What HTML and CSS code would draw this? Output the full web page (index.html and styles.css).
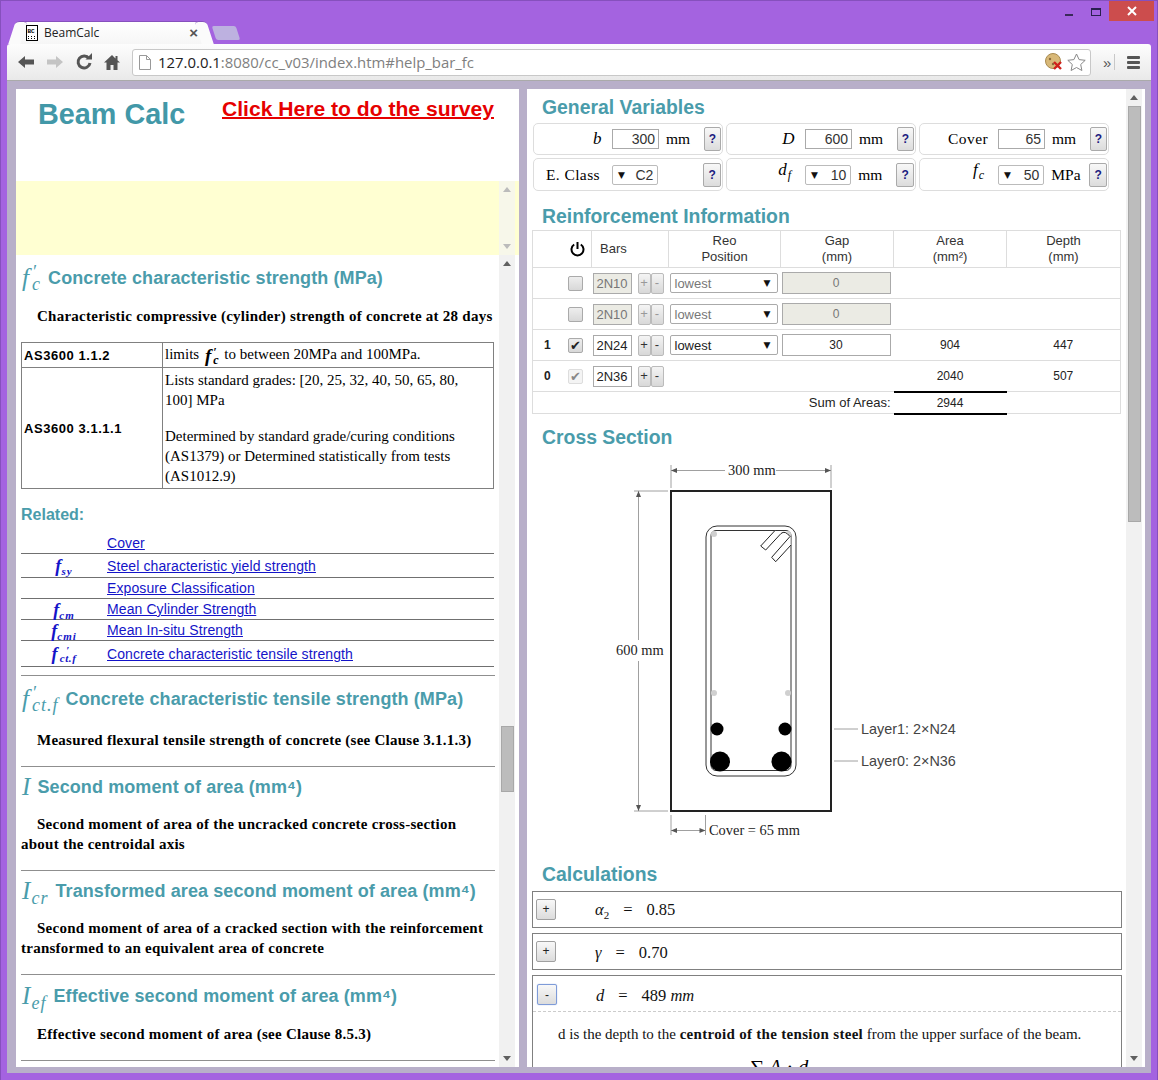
FILE: index.html
```html
<!DOCTYPE html>
<html lang="en">
<head>
<meta charset="utf-8">
<title>BeamCalc</title>
<link rel="stylesheet" href="styles.css">
</head>
<body>
<div class="window">
  <div class="titlebar">
    <div class="tab">
      <svg class="favicon" width="12" height="16" viewBox="0 0 12 16"><rect x=".5" y=".5" width="11" height="15" fill="#fff" stroke="#000"/><text x="1.5" y="7.5" class="fav-text">BC</text><path d="M2 11h1v1H2zM5 11h1v1H5zM8 11h1v1H8zM2 13h1v1H2zM5 13h1v1H5zM8 13h1v1H8z" fill="#000"/></svg>
      <span class="tab-title">BeamCalc</span>
      <span class="tab-close">×</span>
    </div>
    <div class="new-tab"></div>
    <div class="win-controls">
      <span class="win-min"></span>
      <span class="win-max"></span>
      <span class="win-close"><svg width="10" height="10" viewBox="0 0 10 10"><path d="M1 1l8 8M9 1l-8 8" stroke="#fff" stroke-width="2"/></svg></span>
    </div>
  </div>

  <div class="toolbar">
    <svg class="tool-icon" width="18" height="16" viewBox="0 0 18 16"><path d="M1 8l7-6v3.500h9v5H8V14z" fill="#555"/></svg>
    <svg class="tool-icon" width="18" height="16" viewBox="0 0 18 16"><path d="M17 8l-7-6v3.500H1v5h9V14z" fill="#c4c4c4"/></svg>
    <svg class="tool-icon" width="18" height="18" viewBox="0 0 18 18"><path d="M14 5.500A6 6 0 1 0 15 10" fill="none" stroke="#555" stroke-width="3"/><path d="M10.500 6.500H17V0z" fill="#555"/></svg>
    <svg class="tool-icon" width="16" height="16" viewBox="0 0 16 16"><path d="M8 1L0 8.500h2.500V16h4v-5h3v5h4V8.500H16l-2.500-2.300V2h-2v2.400z" fill="#555"/></svg>
    <div class="address">
      <svg class="page-icon" width="12" height="15" viewBox="0 0 12 15"><path d="M.5.500h7l4 4v10H.5z M7.500.500v4h4" fill="#fff" stroke="#999"/></svg>
      <span class="url"><span class="url-host">127.0.0.1</span>:8080/cc_v03/index.htm#help_bar_fc</span>
      <svg class="cookie" width="18" height="18" viewBox="0 0 18 18"><circle cx="8" cy="8" r="7.500" fill="#d8b878" stroke="#a88a50"/><circle cx="5" cy="6" r="1.200" fill="#8a6a3a"/><circle cx="8" cy="11" r="1.200" fill="#8a6a3a"/><path d="M9 9l7 7M16 9l-7 7" stroke="#d0201c" stroke-width="2.400"/></svg>
      <svg class="star" width="19" height="18" viewBox="0 0 19 18"><path d="M9.500 1l2.600 5.600 6.100.7-4.500 4.200 1.200 6-5.400-3-5.400 3 1.200-6L.8 7.300l6.100-.7z" fill="#fff" stroke="#888"/></svg>
    </div>
    <span class="chevrons">»</span>
    <span class="tool-sep"></span>
    <span class="menu-btn"><i></i><i></i><i></i></span>
  </div>

  <div class="frame">
    <aside class="left">
      <header class="brand">
        <h1 class="brand-title">Beam Calc</h1>
        <a class="survey" href="#survey">Click Here to do the survey</a>
      </header>
      <div class="notice">
        <div class="notice-body"></div>
        <div class="scrollbar"><span class="arrow up off"></span><span class="track"></span><span class="arrow down off"></span></div>
      </div>
      <div class="help">
        <div class="help-body">
          <h2 class="term first"><span class="sym">f<span class="stack"><span>c</span></span></span>Concrete characteristic strength (MPa)</h2>
          <p class="desc">Characteristic compressive (cylinder) strength of concrete at 28 days</p>
          <table class="refs">
            <tr class="ref-short"><th>AS3600 1.1.2</th><td>limits <span class="msym">f<span class="stack"><span>c</span></span></span> to between 20MPa and 100MPa.</td></tr>
            <tr class="ref-long"><th>AS3600 3.1.1.1</th><td><div>Lists standard grades: [20, 25, 32, 40, 50, 65, 80, 100] MPa</div><div class="ref-para">Determined by standard grade/curing conditions (AS1379) or Determined statistically from tests (AS1012.9)</div></td></tr>
          </table>
          <h3 class="related">Related:</h3>
          <table class="rel">
            <tr class="r22"><td></td><td><a href="#cover">Cover</a></td></tr>
            <tr class="r24"><td class="rs"><span class="rsym">f<sub>sy</sub></span></td><td><a href="#fsy">Steel characteristic yield strength</a></td></tr>
            <tr class="r21"><td></td><td><a href="#ec">Exposure Classification</a></td></tr>
            <tr class="r21"><td class="rs"><span class="rsym">f<sub>cm</sub></span></td><td><a href="#fcm">Mean Cylinder Strength</a></td></tr>
            <tr class="r21"><td class="rs"><span class="rsym">f<sub>cmi</sub></span></td><td><a href="#fcmi">Mean In-situ Strength</a></td></tr>
            <tr class="r26"><td class="rs"><span class="rsym">f<span class="stack"><span>ct.f</span></span></span></td><td><a href="#fctf">Concrete characteristic tensile strength</a></td></tr>
          </table>
          <hr class="rule gap8">
          <h2 class="term tall"><span class="sym">f<span class="stack"><span>ct.f</span></span></span>Concrete characteristic tensile strength (MPa)</h2>
          <p class="desc">Measured flexural tensile strength of concrete (see Clause 3.1.1.3)</p>
          <hr class="rule">
          <h2 class="term"><span class="sym">I</span>Second moment of area (mm⁴)</h2>
          <p class="desc">Second moment of area of the uncracked concrete cross-section about the centroidal axis</p>
          <hr class="rule">
          <h2 class="term"><span class="sym">I<sub>cr</sub></span>Transformed area second moment of area (mm⁴)</h2>
          <p class="desc">Second moment of area of a cracked section with the reinforcement transformed to an equivalent area of concrete</p>
          <hr class="rule">
          <h2 class="term mid"><span class="sym">I<sub>ef</sub></span>Effective second moment of area (mm⁴)</h2>
          <p class="desc">Effective second moment of area (see Clause 8.5.3)</p>
          <hr class="rule">
        </div>
        <div class="scrollbar"><span class="arrow up"></span><span class="track"><span class="thumb thumb-left"></span></span><span class="arrow down"></span></div>
      </div>
    </aside>

    <main class="right">
      <div class="sheet">
        <h2 class="sec sec-first">General Variables</h2>
        <div class="cards">
          <div class="card"><span class="lab math">b</span><input class="num" value="300"><span class="unit">mm</span><button class="q">?</button></div>
          <div class="card"><span class="lab math">D</span><input class="num" value="600"><span class="unit">mm</span><button class="q">?</button></div>
          <div class="card"><span class="lab">Cover</span><input class="num" value="65"><span class="unit">mm</span><button class="q">?</button></div>
          <div class="card tall-card"><span class="lab">E. Class</span><span class="pick"><span class="tri">▼</span><span>C2</span></span><span class="unit"></span><button class="q">?</button></div>
          <div class="card tall-card"><span class="lab math subbed">d<sub>f</sub></span><span class="pick"><span class="tri">▼</span><span>10</span></span><span class="unit">mm</span><button class="q">?</button></div>
          <div class="card tall-card"><span class="lab math subbed">f<sub>c</sub></span><span class="pick"><span class="tri">▼</span><span>50</span></span><span class="unit">MPa</span><button class="q">?</button></div>
        </div>

        <h2 class="sec sec-reo">Reinforcement Information</h2>
        <table class="reo">
          <colgroup><col class="c1"><col class="c2"><col class="c3"><col class="c4"><col class="c5"><col class="c6"></colgroup>
          <tr class="reo-head">
            <th class="hd-power"><svg class="power" width="15" height="16" viewBox="0 0 15 16"><path d="M4.200 3.500a6 6 0 1 0 6.600 0" fill="none" stroke="#000" stroke-width="2"/><path d="M7.500 1v7" stroke="#000" stroke-width="2"/></svg></th>
            <th class="hd-bars">Bars</th><th>Reo<br>Position</th><th>Gap<br>(mm)</th><th>Area<br>(mm²)</th><th>Depth<br>(mm)</th>
          </tr>
          <tr class="off">
            <td class="layer"><b></b><span class="chk"></span></td>
            <td><span class="bar-ctl"><input class="bar" value="2N10"><span class="pm">+</span><span class="pm">-</span></span></td>
            <td><span class="pos">lowest<span class="tri">▼</span></span></td>
            <td><input class="gap" value="0"></td><td></td><td></td>
          </tr>
          <tr class="off">
            <td class="layer"><b></b><span class="chk"></span></td>
            <td><span class="bar-ctl"><input class="bar" value="2N10"><span class="pm">+</span><span class="pm">-</span></span></td>
            <td><span class="pos">lowest<span class="tri">▼</span></span></td>
            <td><input class="gap" value="0"></td><td></td><td></td>
          </tr>
          <tr>
            <td class="layer"><b>1</b><span class="chk">✔</span></td>
            <td><span class="bar-ctl"><input class="bar" value="2N24"><span class="pm">+</span><span class="pm">-</span></span></td>
            <td><span class="pos">lowest<span class="tri">▼</span></span></td>
            <td><input class="gap" value="30"></td><td class="val">904</td><td class="val">447</td>
          </tr>
          <tr>
            <td class="layer"><b>0</b><span class="chk fixed">✔</span></td>
            <td><span class="bar-ctl"><input class="bar" value="2N36"><span class="pm">+</span><span class="pm">-</span></span></td>
            <td></td><td></td><td class="val">2040</td><td class="val">507</td>
          </tr>
          <tr class="sum">
            <td colspan="4" class="sum-label">Sum of Areas:</td><td class="val sum-val">2944</td><td></td>
          </tr>
        </table>

        <h2 class="sec sec-cross">Cross Section</h2>
        <svg class="section" width="380" height="400" viewBox="600 450 380 400">
          <g class="dim">
            <path d="M671 465v23M831 465v23M671 470.500h54M776 470.500h55"/>
            <path d="M634 491h34M634 811h34M638.500 491v149M638.500 661v150"/>
            <path d="M671 815v20M705.500 815v20M671 830.500h34.500"/>
            <path d="M834 729h24M834 761h24"/>
          </g>
          <g class="arrows">
            <path d="M671 470.500l6-2.500v5zM831 470.500l-6-2.500v5zM638.500 491l-2.500 6h5zM638.500 811l-2.500-6h5zM671 830.500l6-2.500v5zM705.500 830.500l-6-2.500v5z"/>
          </g>
          <rect class="beam" x="671" y="491" width="160" height="320"/>
          <rect class="stir" x="706" y="526" width="90" height="250" rx="11"/>
          <rect class="stir" x="711" y="530.500" width="80" height="240" rx="5"/>
          <g class="grey-bars"><circle cx="714" cy="534" r="3"/><circle cx="788" cy="534" r="3"/><circle cx="714" cy="693" r="3"/><circle cx="788" cy="693" r="3"/></g>
          <path class="hook-mask" d="M775 531L760.700 546 772 558 776 562 790.500 546V537L786 531z"/>
          <path class="hook" d="M775 530.500L760.700 546 765.700 550 781 533.500Q785 530 790 536.500L771.700 557.300 775.700 561.700 791 545"/>
          <circle cx="717" cy="729" r="6.500"/><circle cx="785" cy="729" r="6.500"/>
          <circle cx="720" cy="761.500" r="10"/><circle cx="781.500" cy="761.500" r="10"/>
          <text class="t-serif" x="728" y="475">300 mm</text>
          <text class="t-serif" x="616" y="655">600 mm</text>
          <text class="t-serif" x="709" y="835">Cover = 65 mm</text>
          <text class="t-sans" x="861" y="734">Layer1: 2×N24</text>
          <text class="t-sans" x="861" y="766">Layer0: 2×N36</text>
        </svg>

        <h2 class="sec sec-calc">Calculations</h2>
        <div class="calc"><button class="toggle">+</button><span class="expr"><i>α</i><sub>2</sub><span class="eq">=</span>0.85</span></div>
        <div class="calc"><button class="toggle">+</button><span class="expr"><i>γ</i><span class="eq">=</span>0.70</span></div>
        <div class="calc calc-open">
          <div class="calc-row"><button class="toggle focus">-</button><span class="expr"><i>d</i><span class="eq">=</span>489 <i>mm</i></span></div>
          <p class="calc-note">d is the depth to the <b>centroid of the tension steel</b> from the upper surface of the beam.</p>
          <p class="calc-formula">∑ <i>A</i> · <i>d</i></p>
        </div>
      </div>
      <div class="scrollbar"><span class="arrow up"></span><span class="track"><span class="thumb thumb-right"></span></span><span class="arrow down"></span></div>
    </main>
  </div>
</div>
</body>
</html>
```

FILE: styles.css
```css
* { box-sizing: border-box; }
html, body { margin: 0; padding: 0; }
body { width: 1158px; height: 1080px; overflow: hidden; font-family: "Liberation Sans", Arial, sans-serif; }

.window { width: 1158px; height: 1080px; display: flex; flex-direction: column; background: #a463e0; border: 1px solid #8650bd; border-bottom: 0; padding: 0 6px 7px 6px; overflow: hidden; }

/* title bar */
.titlebar { height: 43px; flex: none; display: flex; align-items: flex-end; padding-left: 10px; position: relative; }
.tab { position: relative; width: 188px; height: 23px; background: linear-gradient(#fff, #f6f6f6); border-radius: 5px 5px 0 0; display: flex; align-items: center; padding: 0 7px 1px 9px; font: 12px "Open Sans", sans-serif; color: #222; border-top: 1px solid #8650bd; z-index: 1; }
.tab::before, .tab::after { content: ""; position: absolute; top: -1px; bottom: 0; width: 12px; background: #fbfbfb; border-top: 1px solid #8650bd; border-radius: 4px 4px 0 0; }
.tab::before { left: -5px; transform: skewX(-18deg); }
.tab::after { right: -5px; transform: skewX(18deg); }
.favicon { flex: none; position: relative; z-index: 1; }
.fav-text { font: 700 6px "Liberation Mono", monospace; fill: #000; }
.tab-title { margin-left: 6px; flex: 1; position: relative; z-index: 1; }
.tab-close { font: 700 15px "Liberation Sans", sans-serif; color: #555; position: relative; z-index: 1; }
.new-tab { width: 24px; height: 14px; margin: 0 0 4px 9px; background: #bdb1e0; transform: skewX(18deg); border-radius: 2px; }
.win-controls { position: absolute; top: 0; right: -3px; display: flex; align-items: flex-start; }
.win-min { width: 8px; height: 2px; background: #3a2a5a; margin: 13px 18px 0 0; }
.win-max { width: 10px; height: 8px; border: 1px solid #2a2050; border-top-width: 2px; margin: 7px 8px 0 0; }
.win-close { width: 45px; height: 20px; background: #cc4d4d; display: flex; align-items: center; justify-content: center; }

/* toolbar */
.toolbar { height: 36px; flex: none; display: flex; align-items: center; background: linear-gradient(#fdfdfd, #e9e9e9); border-radius: 3px 3px 0 0; padding: 0 11px 0 10px; gap: 11px; }
.tool-icon { flex: none; }
.address { flex: none; width: 959px; height: 27px; margin-left: 1px; background: #fff; border: 1px solid #c8c8c8; border-radius: 3px; display: flex; align-items: center; padding: 0 4px 0 6px; }
.page-icon { flex: none; }
.url { margin-left: 7px; font: 14.900px "Open Sans", sans-serif; color: #808080; flex: 1; white-space: nowrap; }
.url-host { color: #222; }
.cookie { flex: none; margin-right: 4px; }
.star { flex: none; }
.chevrons { font: 15px "Liberation Sans", sans-serif; color: #555; margin-left: 1px; flex: none; }
.tool-sep { width: 1px; height: 16px; background: #c8c8c8; margin-left: -8px; flex: none; }
.menu-btn { display: flex; flex-direction: column; gap: 2px; width: 13px; margin-left: 1px; flex: none; }
.menu-btn i { display: block; height: 3px; background: #555; border-radius: 1px; }

/* frame */
.frame { flex: 1; min-height: 0; display: flex; gap: 8px; background: #b8afc9; padding: 8px 6px 6px 9px; border-top: 1px solid #aaa; }

/* left */
.left { width: 503px; flex: none; display: flex; flex-direction: column; background: #fff; overflow: hidden; }
.brand { height: 92px; flex: none; display: flex; align-items: flex-start; padding-left: 22px; }
.brand-title { margin: 7px 0 0; font: 700 28.800px/36px "Liberation Sans", sans-serif; color: #4298a8; width: 184px; }
.survey { margin-top: 7px; font: 700 21.100px/25px "Liberation Sans", sans-serif; color: #e60000; text-decoration: underline; text-decoration-thickness: 2px; white-space: nowrap; }
.notice { height: 74px; flex: none; display: flex; background: #ffffd2; padding-right: 4px; }
.notice-body { flex: 1; }
.notice .scrollbar { width: 16px; background: #f7f7ea; }
.help { flex: 1; min-height: 0; display: flex; padding-right: 4px; }
.help-body { flex: 1; min-width: 0; overflow: hidden; padding: 2px 4px 0 5px; }

.scrollbar { width: 16px; flex: none; display: flex; flex-direction: column; background: #f1f1f1; }
.arrow { height: 17px; flex: none; display: flex; align-items: center; justify-content: center; }
.arrow::before { content: ""; border-left: 4px solid transparent; border-right: 4px solid transparent; }
.arrow.up::before { border-bottom: 5px solid #606060; }
.arrow.down::before { border-top: 5px solid #606060; }
.arrow.off.up::before { border-bottom-color: #bbb; }
.arrow.off.down::before { border-top-color: #bbb; }
.track { flex: 1; position: relative; }
.thumb { position: absolute; left: 2px; right: 1px; background: #bcbcbc; border: 1px solid #a8a8a8; }
.thumb-left { top: 454px; height: 66px; }
.thumb-right { top: 0; height: 416px; }

.term { display: flex; align-items: center; height: 30px; margin: 5px 0 12px; font: 700 18px "Liberation Sans", sans-serif; letter-spacing: .1px; color: #4a9cab; white-space: nowrap; }
.term.first { height: 32px; }
.term.tall { height: 36px; margin-bottom: 13px; }
.term.mid { height: 32px; }
.sym { font: italic 400 25px "Liberation Serif", serif; color: #4a9cab; margin: 0 7px 0 1px; display: inline-flex; align-items: center; }
.sym sub { font-size: 18px; vertical-align: baseline; position: relative; top: 7px; line-height: 0; margin-left: 1px; letter-spacing: 1px; }
.sym .stack { font-size: 18px; letter-spacing: 1px; margin-left: 3px; }
.stack { display: inline-flex; flex-direction: column; line-height: 12px; margin-left: 2px; }
.stack::before { content: "′"; height: 12px; }
.desc { margin: 0 0 16px; font: 700 15px/20px "Liberation Serif", serif; color: #000; text-indent: 16px; letter-spacing: .25px; }
.rule { margin: 0; border: 0; height: 1px; background: #8f8f8f; }
.rule.gap8 { margin-top: 8px; }

.refs { width: 473px; margin: 0; border-collapse: collapse; table-layout: fixed; }
.refs th, .refs td { border: 1px solid #808080; padding: 0 2px; font: 15px/20px "Liberation Serif", serif; text-align: left; vertical-align: middle; }
.refs td { padding-right: 7px; }
.refs th { width: 141px; font: 700 13px "Liberation Sans", sans-serif; letter-spacing: .55px; }
.ref-short { height: 25px; }
.ref-long { height: 121px; }
.ref-para { margin-top: 16px; }
.msym { font: italic 700 19px/20px "Liberation Serif", serif; display: inline-flex; align-items: center; margin: 0 2px; vertical-align: middle; }
.msym .stack { font-size: 12px; line-height: 8px; }
.msym .stack::before { height: 8px; }

.related { margin: 16px 0 7px; font: 700 16px/20px "Liberation Sans", sans-serif; color: #4a9cab; }
.rel { width: 473px; border-collapse: separate; border-spacing: 0; table-layout: fixed; }
.rel td { border-bottom: 1px solid #707070; padding: 0; font: 14px/16px "Liberation Sans", sans-serif; letter-spacing: .1px; }
.rel td:first-child { width: 86px; }
.rel a { color: #1414c8; text-decoration: underline; }
.r22 { height: 22px; }
.r24 { height: 24px; }
.r21 { height: 21px; }
.r26 { height: 26px; }
.rs { text-align: center; }
.rsym { font: italic 700 18px/16px "Liberation Serif", serif; color: #1414c8; display: inline-flex; align-items: center; vertical-align: middle; }
.rsym sub { font-size: 11px; line-height: 0; position: relative; top: 5px; vertical-align: baseline; letter-spacing: 1px; }
.rsym .stack { font-size: 11px; line-height: 8px; letter-spacing: .6px; }
.rsym .stack::before { height: 8px; }

/* right */
.right { width: 618px; flex: none; display: flex; background: #fff; overflow: hidden; padding-right: 3px; }
.sheet { flex: 1; min-width: 0; overflow: hidden; padding-left: 5px; }
.sec { margin: 0; padding-left: 10px; font: 700 19.400px/21px "Liberation Sans", sans-serif; color: #4a9cab; }
.sec-first { margin: 8px 0 5px; }
.sec-reo { margin: 15px 0 3px; }
.sec-cross { margin: 12px 0 2px; }
.sec-calc { margin: 14px 0 6px; }

.cards { display: grid; grid-template-columns: repeat(3, 190px); grid-auto-rows: auto; gap: 3px; margin-left: 1px; }
.card { height: 32px; border: 1px solid #ddd; border-radius: 5px; display: flex; align-items: center; padding: 0 1px 0 0; font: 15.500px "Liberation Serif", serif; color: #000; }
.tall-card { height: 33px; }
.lab { width: 78px; flex: none; text-align: right; padding-right: 10px; letter-spacing: .4px; white-space: nowrap; }
.card:nth-child(4) .lab { text-align: left; padding: 0 0 0 12px; }
.math { font-style: italic; font-size: 17px; }
.math.subbed { padding-right: 13px; letter-spacing: 1px; line-height: 18px; margin-top: -3px; }
.math sub { font-size: 12px; }
.num { width: 47px; height: 20px; border: 1px solid #aaa; padding: 0 3px; font: 14px "Liberation Sans", sans-serif; text-align: right; color: #333; border-radius: 0; }
.pick { width: 47px; height: 20px; border: 1px solid #bbb; border-radius: 2px; padding: 0 4px 0 5px; display: flex; justify-content: space-between; align-items: center; font: 14px "Liberation Sans", sans-serif; color: #333; }
.tri { font: 9px "DejaVu Sans", sans-serif; color: #111; }
.unit { width: 45px; flex: none; padding-left: 7px; white-space: nowrap; }
.q { width: 18px; height: 24px; padding: 0; border: 1px solid #aaa; border-radius: 2px; background: linear-gradient(#f8f8f8, #dcdcdc); font: 700 12px "Liberation Sans", sans-serif; color: #1c1c80; }

.reo { width: 588px; border-collapse: collapse; table-layout: fixed; border: 1px solid #ddd; font: 12px "Liberation Sans", sans-serif; color: #222; }
.c1 { width: 59px; } .c2 { width: 77px; } .c3 { width: 112px; } .c4 { width: 113px; } .c5 { width: 113px; } .c6 { width: 114px; }
.reo tr { height: 31px; border-bottom: 1px solid #ddd; }
.reo-head { height: 37px !important; }
.reo th { border-left: 1px solid #ddd; font: 400 13px/16px "Liberation Sans", sans-serif; color: #333; padding: 0; text-align: center; }
.reo th:first-child { border-left: 0; text-align: right; padding-right: 6px; }
.reo th.hd-bars { text-align: left; padding-left: 8px; }
.power { display: inline-block; vertical-align: middle; }
.reo td { padding: 0; }
.layer { display: flex; align-items: center; height: 30px; padding-left: 11px !important; }
.layer b { width: 24px; font: 700 12px "Liberation Sans", sans-serif; }
.chk { width: 15px; height: 15px; border: 1px solid #aaa; border-radius: 2px; background: linear-gradient(#eee, #d8d8d8); display: flex; align-items: center; justify-content: center; font: 13px "DejaVu Sans", sans-serif; color: #222; }
.chk.fixed { color: #888; border-color: #ddd; background: #f4f4f4; }
.bar-ctl { display: flex; align-items: center; padding-left: 1px; }
.bar { width: 39px; height: 21px; border: 1px solid #aaa; padding: 0; text-align: center; font: 13px "Liberation Sans", sans-serif; color: #222; border-radius: 0; }
.pm { width: 13px; height: 21px; border: 1px solid #bbb; background: linear-gradient(#f4f4f4, #d8d8d8); text-align: center; font: 13px/18px "Liberation Sans", sans-serif; color: #333; border-radius: 2px; }
.bar + .pm { margin-left: 6px; }
.pos { display: flex; justify-content: space-between; align-items: center; width: 108px; height: 20px; margin-left: 1px; padding: 0 6px 0 4px; border: 1px solid #aaa; border-radius: 2px; font: 13px "Liberation Sans", sans-serif; color: #222; }
.gap { display: block; width: 109px; height: 22px; margin-left: 1px; border: 1px solid #aaa; padding: 0; text-align: center; font: 12px "Liberation Sans", sans-serif; color: #222; border-radius: 0; }
.off .bar, .off .gap { background: #ebebe4; color: #777; }
.off .pm { color: #999; }
.off .pos { color: #777; }
.val { text-align: center; }
.reo .sum { height: 22px; border-bottom: 0; }
.sum-label { text-align: right; padding-right: 3px !important; font-size: 13px; }
.sum-val { border-top: 2px solid #000; border-bottom: 2px solid #000; }

.section { display: block; margin-left: 68px; }
.dim path { fill: none; stroke: #a0a0a0; stroke-width: 1; }
.arrows path { fill: #555; }
.beam { fill: #fff; stroke: #222; stroke-width: 2; }
.stir { fill: none; stroke: #333; stroke-width: 1; }
.grey-bars circle { fill: #d0d0d0; }
.hook-mask { fill: #fff; }
.hook { fill: #fff; stroke: #222; stroke-width: 1; }
.t-serif { font: 14.400px "Liberation Serif", serif; fill: #222; }
.t-sans { font: 14.400px "Liberation Sans", sans-serif; fill: #444; }

.calc { width: 590px; height: 37px; margin-bottom: 5px; border: 1px solid #808080; display: flex; align-items: center; padding-left: 3px; }
.calc-open { display: block; height: 120px; padding-left: 0; margin-bottom: 0; border-bottom: 0; }
.calc-row { height: 36px; display: flex; align-items: center; padding: 3px 0 0 4px; border-bottom: 1px dashed #ccc; }
.toggle { width: 20px; height: 21px; padding: 0; border: 1px solid #a0a0a0; border-radius: 2px; background: linear-gradient(#f8f8f8, #dcdcdc); font: 12px "Liberation Sans", sans-serif; color: #222; flex: none; }
.toggle.focus { border: 1px solid #7e9bd8; box-shadow: 0 0 1px #7e9bd8; }
.expr { margin-left: 39px; padding-top: 3px; font: 16.500px "Liberation Serif", serif; color: #111; }
.expr sub { font-size: 11px; }
.eq { margin: 0 14px; }
.calc-note { margin: 12px 0 0 25px; font: 15px/20px "Liberation Serif", serif; color: #111; }
.calc-note b { letter-spacing: .3px; }
.calc-formula { margin: 13px 0 0 217px; font: 20px/20px "Liberation Serif", serif; }
```
